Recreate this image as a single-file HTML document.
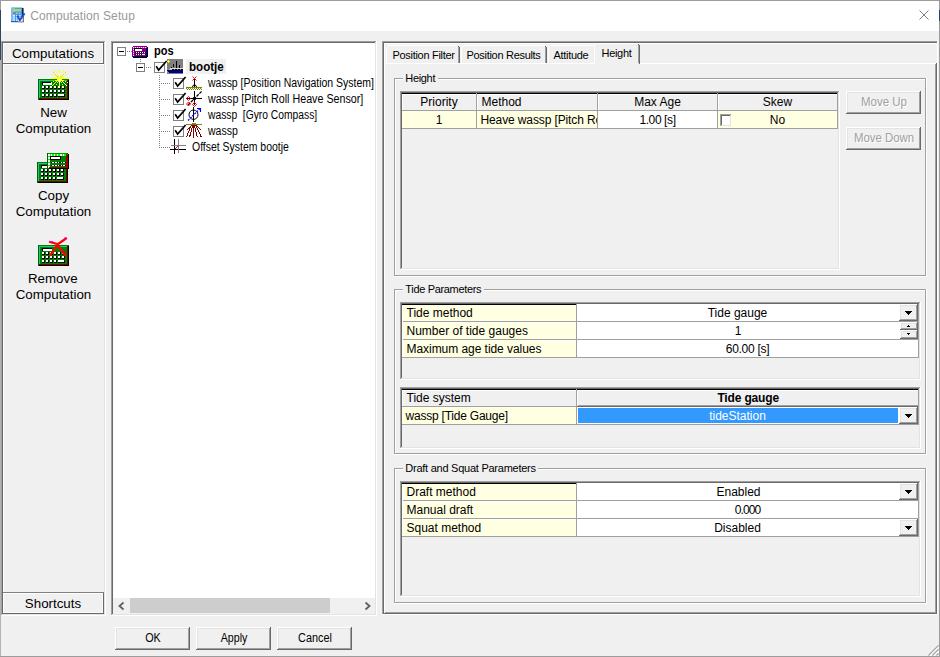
<!DOCTYPE html>
<html><head><meta charset="utf-8"><title>Computation Setup</title>
<style>
html,body{margin:0;padding:0;}
body{width:940px;height:657px;position:relative;overflow:hidden;background:#f0f0f0;font-family:"Liberation Sans",sans-serif;}
.a{position:absolute;}
.t{white-space:pre;font-family:"Liberation Sans",sans-serif;}
</style></head><body>
<div class="a" style="left:1px;top:1px;width:938px;height:30px;background:#ffffff;"></div>
<div class="a" style="left:0px;top:0px;width:940px;height:1px;background:#9c9c9c;"></div>
<div class="a" style="left:0px;top:0px;width:1px;height:10px;background:#9c9c9c;"></div>
<div class="a" style="left:0px;top:10px;width:1px;height:50px;background:#2a4763;"></div>
<div class="a" style="left:0px;top:60px;width:1px;height:597px;background:#b4b4b4;"></div>
<div class="a" style="left:939px;top:0px;width:1px;height:10px;background:#9c9c9c;"></div>
<div class="a" style="left:939px;top:10px;width:1px;height:11px;background:#25456a;"></div>
<div class="a" style="left:939px;top:21px;width:1px;height:636px;background:#9c9c9c;"></div>
<div class="a" style="left:0px;top:656px;width:940px;height:1px;background:#9c9c9c;"></div>
<svg class="a" style="left:11px;top:7px;shape-rendering:auto" width="14" height="16" viewBox="0 0 14 16" shape-rendering="crispEdges"><rect x="0" y="0.5" width="12" height="14.5" rx="1" fill="#4a98ec"/><rect x="0" y="0.5" width="4" height="14.5" fill="#8cc4f8" opacity=".75"/><rect x="11" y="1" width="1.6" height="7" fill="#10243c"/><rect x="2" y="2" width="8" height="2.4" fill="#9be15a"/><rect x="2.2" y="5.5" width="1.6" height="1.4" fill="#e03020"/><rect x="5" y="5.5" width="1.6" height="1.4" fill="#c0c8d0"/><rect x="7.8" y="5.5" width="1.6" height="1.4" fill="#c0c8d0"/><rect x="2.2" y="8" width="1.6" height="1.4" fill="#e8f2ff"/><rect x="5" y="8" width="1.6" height="1.4" fill="#e8f2ff"/><rect x="7.8" y="8" width="1.6" height="1.4" fill="#e8f2ff"/><rect x="2.2" y="10.2" width="1.6" height="1.4" fill="#e8f2ff"/><rect x="5" y="10.2" width="1.6" height="1.4" fill="#e8f2ff"/><rect x="7.8" y="10.2" width="1.6" height="1.4" fill="#e8f2ff"/><rect x="2.2" y="12.4" width="1.6" height="1.4" fill="#e8f2ff"/><rect x="5" y="12.4" width="1.6" height="1.4" fill="#e8f2ff"/><rect x="7.8" y="12.4" width="1.6" height="1.4" fill="#e8f2ff"/><rect x="0" y="14" width="7" height="1.2" fill="#1b5fb8"/><rect x="7" y="10" width="5.5" height="5" fill="#f4f6f8"/><rect x="6.8" y="14.3" width="6" height="1.2" fill="#8a9098"/><rect x="11.8" y="9" width="1" height="6" fill="#50565e"/><path d="M6.3 8.6 L8.8 13.2 L13.6 6.2" stroke="#1c50c8" stroke-width="2" fill="none" shape-rendering="auto"/></svg>
<div class="a t " style="top:9.84px;font-size:12px;line-height:12px;color:#999999;letter-spacing:0.12px;left:30.2px;">Computation Setup</div>
<svg class="a" style="left:918px;top:9px" width="12" height="12" viewBox="0 0 12 12"><path d="M1.5 1.5 L10.5 10.5 M10.5 1.5 L1.5 10.5" stroke="#808080" stroke-width="1" fill="none"/></svg>
<div class="a" style="left:1px;top:615px;width:105px;height:1px;background:#ffffff;"></div>
<div class="a" style="left:105px;top:41px;width:1px;height:575px;background:#ffffff;"></div>
<div class="a" style="left:2px;top:614px;width:103px;height:1px;background:#e3e3e3;"></div>
<div class="a" style="left:104px;top:42px;width:1px;height:573px;background:#e3e3e3;"></div>
<div class="a" style="left:1px;top:41px;width:104px;height:1px;background:#a0a0a0;"></div>
<div class="a" style="left:1px;top:41px;width:1px;height:574px;background:#a0a0a0;"></div>
<div class="a" style="left:2px;top:42px;width:102px;height:1px;background:#696969;"></div>
<div class="a" style="left:2px;top:42px;width:1px;height:572px;background:#696969;"></div>
<div class="a" style="left:3px;top:63px;width:101px;height:1px;background:#696969;"></div>
<div class="a" style="left:103px;top:43px;width:1px;height:21px;background:#696969;"></div>
<div class="a" style="left:4px;top:62px;width:99px;height:1px;background:#fafafa;"></div>
<div class="a" style="left:102px;top:44px;width:1px;height:19px;background:#fafafa;"></div>
<div class="a" style="left:3px;top:43px;width:100px;height:1px;background:#ffffff;"></div>
<div class="a" style="left:3px;top:43px;width:1px;height:20px;background:#ffffff;"></div>
<div class="a" style="left:3px;top:64px;width:101px;height:1px;background:#ffffff;"></div>
<div class="a" style="left:3px;top:64px;width:1px;height:528px;background:#ffffff;"></div>
<div class="a" style="left:3px;top:592px;width:101px;height:1px;background:#808080;"></div>
<div class="a" style="left:3px;top:613px;width:101px;height:1px;background:#696969;"></div>
<div class="a" style="left:103px;top:593px;width:1px;height:21px;background:#696969;"></div>
<div class="a" style="left:4px;top:612px;width:99px;height:1px;background:#fafafa;"></div>
<div class="a" style="left:102px;top:594px;width:1px;height:19px;background:#fafafa;"></div>
<div class="a" style="left:3px;top:593px;width:100px;height:1px;background:#ffffff;"></div>
<div class="a" style="left:3px;top:593px;width:1px;height:20px;background:#ffffff;"></div>
<div class="a t " style="top:46.72px;font-size:13.33px;line-height:13.33px;color:#000;left:-147px;width:400px;text-align:center;">Computations</div>
<div class="a t " style="top:596.72px;font-size:13.33px;line-height:13.33px;color:#000;left:-147px;width:400px;text-align:center;">Shortcuts</div>
<div class="a t " style="top:105.72px;font-size:13.33px;line-height:13.33px;color:#000;left:-146.5px;width:400px;text-align:center;">New</div>
<div class="a t " style="top:121.72px;font-size:13.33px;line-height:13.33px;color:#000;left:-146.5px;width:400px;text-align:center;">Computation</div>
<div class="a t " style="top:188.72px;font-size:13.33px;line-height:13.33px;color:#000;left:-146.5px;width:400px;text-align:center;">Copy</div>
<div class="a t " style="top:204.72px;font-size:13.33px;line-height:13.33px;color:#000;left:-146.5px;width:400px;text-align:center;">Computation</div>
<div class="a t " style="top:271.72px;font-size:13.33px;line-height:13.33px;color:#000;left:-147.2px;width:400px;text-align:center;">Remove</div>
<div class="a t " style="top:287.72px;font-size:13.33px;line-height:13.33px;color:#000;left:-146.5px;width:400px;text-align:center;">Computation</div>
<svg class="a" style="left:30px;top:70px;" width="40" height="32" viewBox="0 0 40 32" shape-rendering="crispEdges"><rect x="8" y="9" width="31" height="21" fill="#008000"/><rect x="8" y="9" width="1" height="20" fill="#006000"/><rect x="9" y="10" width="1" height="18" fill="#20c890"/><rect x="9" y="10" width="28" height="1" fill="#20c890"/><rect x="9" y="28" width="29" height="1" fill="#800000"/><rect x="37" y="10" width="1" height="19" fill="#800000"/><rect x="9" y="29" width="30" height="1" fill="#000000"/><rect x="38" y="10" width="1" height="20" fill="#000000"/><rect x="12" y="12" width="10" height="3" fill="#000000"/><rect x="13" y="13" width="9" height="2" fill="#ffffff"/><rect x="12" y="16" width="3" height="3" fill="#000000"/><rect x="12" y="16" width="2" height="2" fill="#ffffff"/><rect x="16" y="16" width="3" height="3" fill="#000000"/><rect x="16" y="16" width="2" height="2" fill="#ffffff"/><rect x="20" y="16" width="3" height="3" fill="#000000"/><rect x="20" y="16" width="2" height="2" fill="#ffffff"/><rect x="24" y="16" width="3" height="3" fill="#000000"/><rect x="24" y="16" width="2" height="2" fill="#ffffff"/><rect x="28" y="16" width="3" height="3" fill="#000000"/><rect x="28" y="16" width="2" height="2" fill="#ffffff"/><rect x="32" y="16" width="3" height="3" fill="#000000"/><rect x="32" y="16" width="2" height="2" fill="#ffffff"/><rect x="12" y="20" width="3" height="3" fill="#000000"/><rect x="12" y="20" width="2" height="2" fill="#ffffff"/><rect x="16" y="20" width="3" height="3" fill="#000000"/><rect x="16" y="20" width="2" height="2" fill="#ffffff"/><rect x="20" y="20" width="3" height="3" fill="#000000"/><rect x="20" y="20" width="2" height="2" fill="#ffffff"/><rect x="24" y="20" width="3" height="3" fill="#000000"/><rect x="24" y="20" width="2" height="2" fill="#ffffff"/><rect x="28" y="20" width="3" height="3" fill="#000000"/><rect x="28" y="20" width="2" height="2" fill="#ffffff"/><rect x="32" y="20" width="3" height="3" fill="#000000"/><rect x="32" y="20" width="2" height="2" fill="#ffffff"/><rect x="12" y="24" width="3" height="3" fill="#000000"/><rect x="12" y="24" width="2" height="2" fill="#ffffff"/><rect x="16" y="24" width="3" height="3" fill="#000000"/><rect x="16" y="24" width="2" height="2" fill="#ffffff"/><rect x="20" y="24" width="3" height="3" fill="#000000"/><rect x="20" y="24" width="2" height="2" fill="#ffffff"/><rect x="24" y="24" width="3" height="3" fill="#000000"/><rect x="24" y="24" width="2" height="2" fill="#ffffff"/><rect x="28" y="24" width="7" height="3" fill="#000000"/><rect x="28" y="24" width="6" height="2" fill="#ffffff"/><rect x="29" y="7" width="1" height="1" fill="#ffff00"/><rect x="29" y="9" width="1" height="1" fill="#ffff00"/><rect x="28" y="8" width="1" height="1" fill="#ffff00"/><rect x="30" y="8" width="1" height="1" fill="#ffff00"/><rect x="29" y="6" width="1" height="1" fill="#ffff00"/><rect x="29" y="10" width="1" height="1" fill="#ffff00"/><rect x="27" y="8" width="1" height="1" fill="#ffff00"/><rect x="31" y="8" width="1" height="1" fill="#ffff00"/><rect x="29" y="5" width="1" height="1" fill="#ffff00"/><rect x="29" y="11" width="1" height="1" fill="#ffff00"/><rect x="26" y="8" width="1" height="1" fill="#ffff00"/><rect x="32" y="8" width="1" height="1" fill="#ffff00"/><rect x="29" y="4" width="1" height="1" fill="#ffff00"/><rect x="29" y="12" width="1" height="1" fill="#ffff00"/><rect x="25" y="8" width="1" height="1" fill="#ffff00"/><rect x="33" y="8" width="1" height="1" fill="#ffff00"/><rect x="29" y="3" width="1" height="1" fill="#ffff00"/><rect x="29" y="13" width="1" height="1" fill="#ffff00"/><rect x="24" y="8" width="1" height="1" fill="#ffff00"/><rect x="34" y="8" width="1" height="1" fill="#ffff00"/><rect x="29" y="2" width="1" height="1" fill="#ffff00"/><rect x="29" y="14" width="1" height="1" fill="#ffff00"/><rect x="23" y="8" width="1" height="1" fill="#ffff00"/><rect x="35" y="8" width="1" height="1" fill="#ffff00"/><rect x="29" y="1" width="1" height="1" fill="#ffff00"/><rect x="29" y="15" width="1" height="1" fill="#ffff00"/><rect x="22" y="8" width="1" height="1" fill="#ffff00"/><rect x="36" y="8" width="1" height="1" fill="#ffff00"/><rect x="29" y="0" width="1" height="1" fill="#ffff00"/><rect x="29" y="16" width="1" height="1" fill="#ffff00"/><rect x="21" y="8" width="1" height="1" fill="#ffff00"/><rect x="37" y="8" width="1" height="1" fill="#ffff00"/><rect x="30" y="7" width="1" height="1" fill="#ffff00"/><rect x="28" y="9" width="1" height="1" fill="#ffff00"/><rect x="30" y="9" width="1" height="1" fill="#ffff00"/><rect x="28" y="7" width="1" height="1" fill="#ffff00"/><rect x="31" y="6" width="1" height="1" fill="#c8c8c8"/><rect x="27" y="10" width="1" height="1" fill="#ffff00"/><rect x="31" y="10" width="1" height="1" fill="#ffff00"/><rect x="27" y="6" width="1" height="1" fill="#c0c0c0"/><rect x="32" y="5" width="1" height="1" fill="#ffff00"/><rect x="26" y="11" width="1" height="1" fill="#ffff00"/><rect x="32" y="11" width="1" height="1" fill="#ffffff"/><rect x="26" y="5" width="1" height="1" fill="#ffff00"/><rect x="33" y="4" width="1" height="1" fill="#c8c8c8"/><rect x="25" y="12" width="1" height="1" fill="#ffff00"/><rect x="33" y="12" width="1" height="1" fill="#ffffff"/><rect x="25" y="4" width="1" height="1" fill="#c0c0c0"/><rect x="34" y="3" width="1" height="1" fill="#ffff00"/><rect x="24" y="13" width="1" height="1" fill="#ffff00"/><rect x="34" y="13" width="1" height="1" fill="#ffffff"/><rect x="24" y="3" width="1" height="1" fill="#ffff00"/><rect x="35" y="2" width="1" height="1" fill="#c8c8c8"/><rect x="23" y="14" width="1" height="1" fill="#ffff00"/><rect x="35" y="14" width="1" height="1" fill="#ffffff"/><rect x="23" y="2" width="1" height="1" fill="#c0c0c0"/><rect x="36" y="1" width="1" height="1" fill="#ffff00"/><rect x="22" y="15" width="1" height="1" fill="#ffff00"/><rect x="36" y="15" width="1" height="1" fill="#ffffff"/><rect x="22" y="1" width="1" height="1" fill="#ffff00"/><rect x="31" y="7" width="1" height="1" fill="#ffff00"/><rect x="27" y="9" width="1" height="1" fill="#ffff00"/><rect x="30" y="6" width="1" height="1" fill="#ffff00"/><rect x="28" y="10" width="1" height="1" fill="#ffff00"/><rect x="27" y="7" width="1" height="1" fill="#ffff00"/><rect x="31" y="9" width="1" height="1" fill="#ffff00"/><rect x="28" y="6" width="1" height="1" fill="#ffff00"/><rect x="30" y="10" width="1" height="1" fill="#ffff00"/><rect x="32" y="6" width="1" height="1" fill="#ffff00"/><rect x="26" y="10" width="1" height="1" fill="#ffff00"/><rect x="30" y="5" width="1" height="1" fill="#ffff00"/><rect x="28" y="11" width="1" height="1" fill="#ffff00"/><rect x="26" y="6" width="1" height="1" fill="#ffff00"/><rect x="32" y="10" width="1" height="1" fill="#ffff00"/><rect x="28" y="5" width="1" height="1" fill="#ffff00"/><rect x="30" y="11" width="1" height="1" fill="#ffff00"/><rect x="33" y="6" width="1" height="1" fill="#ffff00"/><rect x="25" y="10" width="1" height="1" fill="#ffff00"/><rect x="31" y="4" width="1" height="1" fill="#ffff00"/><rect x="27" y="12" width="1" height="1" fill="#ffff00"/><rect x="25" y="6" width="1" height="1" fill="#ffff00"/><rect x="33" y="10" width="1" height="1" fill="#ffff00"/><rect x="27" y="4" width="1" height="1" fill="#ffff00"/><rect x="31" y="12" width="1" height="1" fill="#ffff00"/><rect x="35" y="5" width="1" height="1" fill="#ffff00"/><rect x="23" y="11" width="1" height="1" fill="#ffff00"/><rect x="32" y="2" width="1" height="1" fill="#ffff00"/><rect x="26" y="14" width="1" height="1" fill="#ffff00"/><rect x="23" y="5" width="1" height="1" fill="#ffff00"/><rect x="35" y="11" width="1" height="1" fill="#ffff00"/><rect x="26" y="2" width="1" height="1" fill="#ffff00"/><rect x="32" y="14" width="1" height="1" fill="#ffff00"/><rect x="37" y="4" width="1" height="1" fill="#ffff00"/><rect x="21" y="12" width="1" height="1" fill="#ffff00"/><rect x="33" y="0" width="1" height="1" fill="#ffff00"/><rect x="25" y="16" width="1" height="1" fill="#ffff00"/><rect x="21" y="4" width="1" height="1" fill="#ffff00"/><rect x="37" y="12" width="1" height="1" fill="#ffff00"/><rect x="25" y="0" width="1" height="1" fill="#ffff00"/><rect x="33" y="16" width="1" height="1" fill="#ffff00"/><rect x="27" y="7" width="5" height="3" fill="#ffff00"/><rect x="28" y="6" width="3" height="5" fill="#ffff00"/><rect x="29" y="3" width="1" height="4" fill="#ffffff"/><rect x="29" y="9" width="1" height="6" fill="#ffffff"/><rect x="30" y="9" width="1" height="1" fill="#ffffff"/></svg>
<svg class="a" style="left:30px;top:148px;" width="40" height="36" viewBox="0 0 40 36" shape-rendering="crispEdges"><rect x="7" y="14" width="31" height="21" fill="#008000"/><rect x="7" y="14" width="1" height="20" fill="#006000"/><rect x="8" y="15" width="1" height="18" fill="#20c890"/><rect x="8" y="15" width="28" height="1" fill="#20c890"/><rect x="8" y="33" width="29" height="1" fill="#800000"/><rect x="36" y="15" width="1" height="19" fill="#800000"/><rect x="8" y="34" width="30" height="1" fill="#000000"/><rect x="37" y="15" width="1" height="20" fill="#000000"/><rect x="11" y="17" width="10" height="3" fill="#000000"/><rect x="12" y="18" width="9" height="2" fill="#ffffff"/><rect x="11" y="21" width="3" height="3" fill="#000000"/><rect x="11" y="21" width="2" height="2" fill="#ffffff"/><rect x="15" y="21" width="3" height="3" fill="#000000"/><rect x="15" y="21" width="2" height="2" fill="#ffffff"/><rect x="19" y="21" width="3" height="3" fill="#000000"/><rect x="19" y="21" width="2" height="2" fill="#ffffff"/><rect x="23" y="21" width="3" height="3" fill="#000000"/><rect x="23" y="21" width="2" height="2" fill="#ffffff"/><rect x="27" y="21" width="3" height="3" fill="#000000"/><rect x="27" y="21" width="2" height="2" fill="#ffffff"/><rect x="31" y="21" width="3" height="3" fill="#000000"/><rect x="31" y="21" width="2" height="2" fill="#ffffff"/><rect x="11" y="25" width="3" height="3" fill="#000000"/><rect x="11" y="25" width="2" height="2" fill="#ffffff"/><rect x="15" y="25" width="3" height="3" fill="#000000"/><rect x="15" y="25" width="2" height="2" fill="#ffffff"/><rect x="19" y="25" width="3" height="3" fill="#000000"/><rect x="19" y="25" width="2" height="2" fill="#ffffff"/><rect x="23" y="25" width="3" height="3" fill="#000000"/><rect x="23" y="25" width="2" height="2" fill="#ffffff"/><rect x="27" y="25" width="3" height="3" fill="#000000"/><rect x="27" y="25" width="2" height="2" fill="#ffffff"/><rect x="31" y="25" width="3" height="3" fill="#000000"/><rect x="31" y="25" width="2" height="2" fill="#ffffff"/><rect x="11" y="29" width="3" height="3" fill="#000000"/><rect x="11" y="29" width="2" height="2" fill="#ffffff"/><rect x="15" y="29" width="3" height="3" fill="#000000"/><rect x="15" y="29" width="2" height="2" fill="#ffffff"/><rect x="19" y="29" width="3" height="3" fill="#000000"/><rect x="19" y="29" width="2" height="2" fill="#ffffff"/><rect x="23" y="29" width="3" height="3" fill="#000000"/><rect x="23" y="29" width="2" height="2" fill="#ffffff"/><rect x="27" y="29" width="7" height="3" fill="#000000"/><rect x="27" y="29" width="6" height="2" fill="#ffffff"/><rect x="17" y="5" width="21" height="15" fill="#008000"/><rect x="18" y="5" width="19" height="1" fill="#009000"/><rect x="17" y="5" width="1" height="15" fill="#006000"/><rect x="18" y="6" width="18" height="2" fill="#00ff00"/><rect x="18" y="6" width="2" height="13" fill="#00ff00"/><rect x="18" y="6" width="2" height="2" fill="#ffffff"/><rect x="21" y="6" width="1" height="2" fill="#ffffff"/><rect x="24" y="6" width="1" height="2" fill="#ffffff"/><rect x="27" y="6" width="1" height="2" fill="#ffffff"/><rect x="30" y="6" width="2" height="2" fill="#ffffff"/><rect x="33" y="6" width="1" height="2" fill="#ffffff"/><rect x="18" y="6" width="2" height="2" fill="#ffffff"/><rect x="18" y="9" width="2" height="2" fill="#ffffff"/><rect x="18" y="12" width="2" height="2" fill="#ffffff"/><rect x="18" y="15" width="2" height="2" fill="#ffffff"/><rect x="18" y="18" width="2" height="2" fill="#ffffff"/><rect x="36" y="7" width="2" height="12" fill="#a00000"/><rect x="19" y="19" width="19" height="1" fill="#a00000"/><rect x="38" y="6" width="1" height="14" fill="#000000"/><rect x="19" y="20" width="20" height="1" fill="#000000"/><rect x="20" y="8" width="11" height="4" fill="#000000"/><rect x="21" y="9" width="9" height="2" fill="#ffffff"/><rect x="21" y="14" width="15" height="1" fill="#000000"/><rect x="22" y="14" width="2" height="1" fill="#ffffff"/><rect x="25" y="14" width="2" height="1" fill="#ffffff"/><rect x="28" y="14" width="1" height="1" fill="#ffffff"/><rect x="31" y="14" width="1" height="1" fill="#ffffff"/><rect x="33" y="14" width="2" height="1" fill="#ffffff"/><rect x="21" y="17" width="15" height="1" fill="#000000"/><rect x="22" y="17" width="2" height="1" fill="#ffffff"/><rect x="25" y="17" width="2" height="1" fill="#ffffff"/><rect x="28" y="17" width="1" height="1" fill="#ffffff"/><rect x="31" y="17" width="1" height="1" fill="#ffffff"/><rect x="33" y="17" width="2" height="1" fill="#ffffff"/></svg>
<svg class="a" style="left:30px;top:232px;" width="40" height="36" viewBox="0 0 40 36" shape-rendering="crispEdges"><rect x="8" y="13" width="31" height="21" fill="#008000"/><rect x="8" y="13" width="1" height="20" fill="#006000"/><rect x="9" y="14" width="1" height="18" fill="#20c890"/><rect x="9" y="14" width="28" height="1" fill="#20c890"/><rect x="9" y="32" width="29" height="1" fill="#800000"/><rect x="37" y="14" width="1" height="19" fill="#800000"/><rect x="9" y="33" width="30" height="1" fill="#000000"/><rect x="38" y="14" width="1" height="20" fill="#000000"/><rect x="12" y="16" width="10" height="3" fill="#000000"/><rect x="13" y="17" width="9" height="2" fill="#ffffff"/><rect x="12" y="20" width="3" height="3" fill="#000000"/><rect x="12" y="20" width="2" height="2" fill="#ffffff"/><rect x="16" y="20" width="3" height="3" fill="#000000"/><rect x="16" y="20" width="2" height="2" fill="#ffffff"/><rect x="20" y="20" width="3" height="3" fill="#000000"/><rect x="20" y="20" width="2" height="2" fill="#ffffff"/><rect x="24" y="20" width="3" height="3" fill="#000000"/><rect x="24" y="20" width="2" height="2" fill="#ffffff"/><rect x="28" y="20" width="3" height="3" fill="#000000"/><rect x="28" y="20" width="2" height="2" fill="#ffffff"/><rect x="32" y="20" width="3" height="3" fill="#000000"/><rect x="32" y="20" width="2" height="2" fill="#ffffff"/><rect x="12" y="24" width="3" height="3" fill="#000000"/><rect x="12" y="24" width="2" height="2" fill="#ffffff"/><rect x="16" y="24" width="3" height="3" fill="#000000"/><rect x="16" y="24" width="2" height="2" fill="#ffffff"/><rect x="20" y="24" width="3" height="3" fill="#000000"/><rect x="20" y="24" width="2" height="2" fill="#ffffff"/><rect x="24" y="24" width="3" height="3" fill="#000000"/><rect x="24" y="24" width="2" height="2" fill="#ffffff"/><rect x="28" y="24" width="3" height="3" fill="#000000"/><rect x="28" y="24" width="2" height="2" fill="#ffffff"/><rect x="32" y="24" width="3" height="3" fill="#000000"/><rect x="32" y="24" width="2" height="2" fill="#ffffff"/><rect x="12" y="28" width="3" height="3" fill="#000000"/><rect x="12" y="28" width="2" height="2" fill="#ffffff"/><rect x="16" y="28" width="3" height="3" fill="#000000"/><rect x="16" y="28" width="2" height="2" fill="#ffffff"/><rect x="20" y="28" width="3" height="3" fill="#000000"/><rect x="20" y="28" width="2" height="2" fill="#ffffff"/><rect x="24" y="28" width="3" height="3" fill="#000000"/><rect x="24" y="28" width="2" height="2" fill="#ffffff"/><rect x="28" y="28" width="7" height="3" fill="#000000"/><rect x="28" y="28" width="6" height="2" fill="#ffffff"/><g shape-rendering="auto"><path d="M20 10 L27 12 L35 23 M36 6.5 L28 12 L20.5 23" stroke="#ff0000" stroke-width="2.3" fill="none" stroke-linecap="round"/><path d="M20 9.5 L23 9.5 M34 6 L36.5 6" stroke="#ff00ff" stroke-width="1" /></g></svg>
<div class="a" style="left:111px;top:41px;width:266px;height:575px;background:#ffffff;"></div>
<div class="a" style="left:111px;top:615px;width:266px;height:1px;background:#ffffff;"></div>
<div class="a" style="left:376px;top:41px;width:1px;height:575px;background:#ffffff;"></div>
<div class="a" style="left:112px;top:614px;width:264px;height:1px;background:#e3e3e3;"></div>
<div class="a" style="left:375px;top:42px;width:1px;height:573px;background:#e3e3e3;"></div>
<div class="a" style="left:111px;top:41px;width:265px;height:1px;background:#a0a0a0;"></div>
<div class="a" style="left:111px;top:41px;width:1px;height:574px;background:#a0a0a0;"></div>
<div class="a" style="left:112px;top:42px;width:263px;height:1px;background:#696969;"></div>
<div class="a" style="left:112px;top:42px;width:1px;height:572px;background:#696969;"></div>
<div class="a" style="left:113px;top:598px;width:262px;height:16px;background:#f0f0f0;"></div>
<div class="a" style="left:130px;top:598px;width:200px;height:15px;background:#cdcdcd;"></div>
<svg class="a" style="left:116px;top:600px" width="12" height="12" viewBox="0 0 12 12"><path d="M7.5 2.5 L3.5 6 L7.5 9.5" stroke="#606060" stroke-width="1.8" fill="none"/></svg>
<svg class="a" style="left:361px;top:600px" width="12" height="12" viewBox="0 0 12 12"><path d="M4.5 2.5 L8.5 6 L4.5 9.5" stroke="#606060" stroke-width="1.8" fill="none"/></svg>
<div class="a" style="left:117px;top:47px;width:9px;height:9px;background:#808080;"></div>
<div class="a" style="left:118px;top:48px;width:7px;height:7px;background:#ffffff;"></div>
<div class="a" style="left:119px;top:51px;width:5px;height:1px;background:#000000;"></div>
<div class="a" style="left:127px;top:51px;width:5px;height:1px;background:transparent;background:repeating-linear-gradient(90deg,#808080 0 1px,transparent 1px 2px);"></div>
<div class="a" style="left:136px;top:63px;width:9px;height:9px;background:#808080;"></div>
<div class="a" style="left:137px;top:64px;width:7px;height:7px;background:#ffffff;"></div>
<div class="a" style="left:138px;top:67px;width:5px;height:1px;background:#000000;"></div>
<div class="a" style="left:146px;top:67px;width:6px;height:1px;background:transparent;background:repeating-linear-gradient(90deg,#808080 0 1px,transparent 1px 2px);"></div>
<div class="a" style="left:140px;top:59px;width:1px;height:4px;background:transparent;background:repeating-linear-gradient(180deg,#808080 0 1px,transparent 1px 2px);"></div>
<div class="a" style="left:154px;top:62px;width:11px;height:11px;background:#808080;"></div>
<div class="a" style="left:155px;top:63px;width:9px;height:9px;background:#ffffff;"></div>
<svg class="a" style="left:154px;top:60px" width="16" height="14" viewBox="0 0 16 14"><path d="M2.2 6.3 L4.6 10 L12.6 1" stroke="#000" stroke-width="1.7" fill="none" stroke-linejoin="miter"/></svg>
<div class="a" style="left:159px;top:75px;width:1px;height:73px;background:transparent;background:repeating-linear-gradient(180deg,#808080 0 1px,transparent 1px 2px);"></div>
<div class="a" style="left:161px;top:83px;width:10px;height:1px;background:transparent;background:repeating-linear-gradient(90deg,#808080 0 1px,transparent 1px 2px);"></div>
<div class="a" style="left:173px;top:78px;width:11px;height:11px;background:#808080;"></div>
<div class="a" style="left:174px;top:79px;width:9px;height:9px;background:#ffffff;"></div>
<svg class="a" style="left:173px;top:76px" width="16" height="14" viewBox="0 0 16 14"><path d="M2.2 6.3 L4.6 10 L12.6 1" stroke="#000" stroke-width="1.7" fill="none" stroke-linejoin="miter"/></svg>
<div class="a" style="left:161px;top:99px;width:10px;height:1px;background:transparent;background:repeating-linear-gradient(90deg,#808080 0 1px,transparent 1px 2px);"></div>
<div class="a" style="left:173px;top:94px;width:11px;height:11px;background:#808080;"></div>
<div class="a" style="left:174px;top:95px;width:9px;height:9px;background:#ffffff;"></div>
<svg class="a" style="left:173px;top:92px" width="16" height="14" viewBox="0 0 16 14"><path d="M2.2 6.3 L4.6 10 L12.6 1" stroke="#000" stroke-width="1.7" fill="none" stroke-linejoin="miter"/></svg>
<div class="a" style="left:161px;top:115px;width:10px;height:1px;background:transparent;background:repeating-linear-gradient(90deg,#808080 0 1px,transparent 1px 2px);"></div>
<div class="a" style="left:173px;top:110px;width:11px;height:11px;background:#808080;"></div>
<div class="a" style="left:174px;top:111px;width:9px;height:9px;background:#ffffff;"></div>
<svg class="a" style="left:173px;top:108px" width="16" height="14" viewBox="0 0 16 14"><path d="M2.2 6.3 L4.6 10 L12.6 1" stroke="#000" stroke-width="1.7" fill="none" stroke-linejoin="miter"/></svg>
<div class="a" style="left:161px;top:131px;width:10px;height:1px;background:transparent;background:repeating-linear-gradient(90deg,#808080 0 1px,transparent 1px 2px);"></div>
<div class="a" style="left:173px;top:126px;width:11px;height:11px;background:#808080;"></div>
<div class="a" style="left:174px;top:127px;width:9px;height:9px;background:#ffffff;"></div>
<svg class="a" style="left:173px;top:124px" width="16" height="14" viewBox="0 0 16 14"><path d="M2.2 6.3 L4.6 10 L12.6 1" stroke="#000" stroke-width="1.7" fill="none" stroke-linejoin="miter"/></svg>
<div class="a" style="left:159px;top:147px;width:11px;height:1px;background:transparent;background:repeating-linear-gradient(90deg,#808080 0 1px,transparent 1px 2px);"></div>
<svg class="a" style="left:132px;top:46px;" width="16" height="12" viewBox="0 0 16 12" shape-rendering="crispEdges"><rect x="1" y="0" width="14" height="1" fill="#800080"/><rect x="0" y="1" width="1" height="10" fill="#800080"/><rect x="1" y="1" width="14" height="1" fill="#ff00ff"/><rect x="1" y="1" width="1" height="10" fill="#ff00ff"/><rect x="1" y="1" width="1" height="1" fill="#ffffff"/><rect x="3" y="1" width="1" height="1" fill="#ffffff"/><rect x="5" y="1" width="1" height="1" fill="#ffffff"/><rect x="7" y="1" width="1" height="1" fill="#ffffff"/><rect x="9" y="1" width="1" height="1" fill="#ffffff"/><rect x="11" y="1" width="1" height="1" fill="#ffffff"/><rect x="13" y="1" width="1" height="1" fill="#ffffff"/><rect x="1" y="1" width="1" height="1" fill="#ffffff"/><rect x="1" y="3" width="1" height="1" fill="#ffffff"/><rect x="1" y="5" width="1" height="1" fill="#ffffff"/><rect x="1" y="7" width="1" height="1" fill="#ffffff"/><rect x="1" y="9" width="1" height="1" fill="#ffffff"/><rect x="2" y="2" width="12" height="8" fill="#800080"/><rect x="2" y="2" width="8" height="1" fill="#000000"/><rect x="2" y="2" width="1" height="3" fill="#000000"/><rect x="3" y="3" width="7" height="2" fill="#ffffff"/><rect x="3" y="6" width="11" height="1" fill="#000000"/><rect x="3" y="8" width="11" height="1" fill="#000000"/><rect x="4" y="6" width="1" height="1" fill="#ffffff"/><rect x="6" y="6" width="1" height="1" fill="#ffffff"/><rect x="8" y="6" width="1" height="1" fill="#ffffff"/><rect x="10" y="6" width="1" height="1" fill="#ffffff"/><rect x="12" y="6" width="1" height="1" fill="#ffffff"/><rect x="4" y="8" width="1" height="1" fill="#ffffff"/><rect x="6" y="8" width="1" height="1" fill="#ffffff"/><rect x="8" y="8" width="1" height="1" fill="#ffffff"/><rect x="10" y="8" width="3" height="1" fill="#ffffff"/><rect x="14" y="2" width="1" height="9" fill="#000080"/><rect x="15" y="1" width="1" height="10" fill="#000000"/><rect x="1" y="10" width="14" height="1" fill="#000080"/><rect x="1" y="11" width="14" height="1" fill="#000000"/></svg>
<div class="a t " style="top:45.040000000000006px;font-size:12px;line-height:12px;color:#000;font-weight:bold;transform:scaleX(0.92);transform-origin:0 0;left:154px;">pos</div>
<svg class="a" style="left:167px;top:59px;" width="16" height="15" viewBox="0 0 16 15" shape-rendering="crispEdges"><rect x="0" y="0" width="16" height="15" fill="#808080"/><rect x="6" y="5" width="1" height="3" fill="#000000"/><rect x="9" y="2" width="1" height="7" fill="#000000"/><rect x="12" y="6" width="1" height="3" fill="#000000"/><rect x="4" y="8" width="1" height="1" fill="#000000"/><rect x="3" y="9" width="13" height="1" fill="#e0e0e0"/><rect x="2" y="10" width="3" height="1" fill="#c0c0c0"/><rect x="5" y="10" width="2" height="1" fill="#000000"/><rect x="8" y="10" width="2" height="1" fill="#000000"/><rect x="11" y="10" width="2" height="1" fill="#000000"/><rect x="14" y="10" width="2" height="1" fill="#000000"/><rect x="0" y="11" width="16" height="3" fill="#000080"/><rect x="0" y="13" width="1" height="1" fill="#808080"/><rect x="0" y="12" width="1" height="1" fill="#808080"/><rect x="1" y="13" width="1" height="1" fill="#808080"/><rect x="2" y="12" width="1" height="1" fill="#000000"/><rect x="4" y="12" width="1" height="1" fill="#000000"/><rect x="1" y="1" width="1" height="3" fill="#ffff00"/><rect x="0" y="2" width="3" height="1" fill="#ffff00"/></svg>
<div class="a" style="left:186px;top:59px;width:40px;height:15px;background:#f0f0f0;"></div>
<div class="a t " style="top:61.040000000000006px;font-size:12px;line-height:12px;color:#000;font-weight:bold;transform:scaleX(0.965);transform-origin:0 0;left:189px;">bootje</div>
<svg class="a" style="left:186px;top:76px;" width="16" height="14" viewBox="0 0 16 14" shape-rendering="crispEdges"><rect x="8" y="3" width="1" height="8" fill="#000000"/><g shape-rendering="auto"><path d="M6.5 0.5 L10.5 4.5 M10.5 0.5 L6.5 4.5" stroke="#ff0000" stroke-width="1" fill="none"/><path d="M6.5 11 A2 2 0 0 1 10.5 11" stroke="#000" stroke-width="1" fill="none"/></g><rect x="0" y="11" width="16" height="2" fill="#808000"/><rect x="1" y="12" width="1" height="1" fill="#ffffff"/><rect x="3" y="12" width="1" height="1" fill="#ffffff"/><rect x="5" y="12" width="1" height="1" fill="#ffffff"/><rect x="7" y="12" width="1" height="1" fill="#ffffff"/><rect x="9" y="12" width="1" height="1" fill="#ffffff"/><rect x="11" y="12" width="1" height="1" fill="#ffffff"/><rect x="13" y="12" width="1" height="1" fill="#ffffff"/><rect x="15" y="12" width="1" height="1" fill="#ffffff"/><rect x="1" y="13" width="1" height="1" fill="#808000"/><rect x="3" y="13" width="1" height="1" fill="#808000"/><rect x="5" y="13" width="1" height="1" fill="#808000"/><rect x="7" y="13" width="1" height="1" fill="#808000"/><rect x="9" y="13" width="1" height="1" fill="#808000"/><rect x="11" y="13" width="1" height="1" fill="#808000"/><rect x="13" y="13" width="1" height="1" fill="#808000"/><rect x="15" y="13" width="1" height="1" fill="#808000"/></svg>
<svg class="a" style="left:186px;top:91px;" width="16" height="16" viewBox="0 0 16 16" shape-rendering="crispEdges"><rect x="8" y="0" width="1" height="14" fill="#000000"/><rect x="0" y="7" width="16" height="1" fill="#000000"/><g shape-rendering="auto"><path d="M15.5 0.5 L1.5 14.5" stroke="#000" stroke-width="1.3" stroke-dasharray="3 1" fill="none"/><circle cx="8.5" cy="7.5" r="1.8" fill="#000"/><path d="M0.5 7.5 L2.5 5.5 L4.5 7.5 L2.5 9.5 Z" stroke="#ff0000" stroke-width="1" fill="none"/><path d="M0.5 13 L2.5 11 L4.5 13 L2.5 15 Z" stroke="#ff0000" stroke-width="1" fill="none"/><path d="M6.5 13.5 L8.5 11.5 L10.5 13.5 L8.5 15.5 Z" stroke="#ff0000" stroke-width="1" fill="none"/></g></svg>
<svg class="a" style="left:186px;top:106px;" width="16" height="16" viewBox="0 0 16 16" shape-rendering="crispEdges"><g shape-rendering="auto"><ellipse cx="7.5" cy="8.7" rx="4.5" ry="4.7" stroke="#000" stroke-width="1" fill="none"/><path d="M7.5 1 L7.5 16" stroke="#000" stroke-width="1"/><path d="M2 14.5 L14 2.5" stroke="#0000ff" stroke-width="1.3" stroke-dasharray="2 1" fill="none"/><path d="M11 2.5 L14.5 2.5 L14.5 6" stroke="#0000ff" stroke-width="1.1" fill="none"/></g></svg>
<svg class="a" style="left:186px;top:123px;" width="16" height="16" viewBox="0 0 16 16" shape-rendering="crispEdges"><rect x="0" y="1" width="16" height="1" fill="#808000"/><rect x="6" y="0" width="4" height="1" fill="#808000"/><rect x="5" y="2" width="6" height="1" fill="#800000"/><g shape-rendering="crispEdges" stroke="#800000" stroke-width="1" fill="none"><path d="M4.5 3.5 L0.5 7.5"/><path d="M5 3 L0.5 14"/><path d="M6.5 3 L3.5 14.5"/><path d="M7.5 3 L7.5 14.5"/><path d="M8.5 3 L11.5 14.5"/><path d="M10 3 L15.5 14.5"/><path d="M11.5 3.5 L15.5 7.5"/></g></svg>
<svg class="a" style="left:170px;top:139px;" width="16" height="16" viewBox="0 0 16 16" shape-rendering="crispEdges"><rect x="4" y="0" width="1" height="15" fill="#000000"/><rect x="0" y="10" width="16" height="1" fill="#000000"/><rect x="8" y="0" width="1" height="14" fill="#808080"/><rect x="1" y="6" width="15" height="1" fill="#808080"/><rect x="5" y="9" width="1" height="1" fill="#ff0000"/><rect x="6" y="8" width="1" height="1" fill="#ff0000"/><rect x="7" y="7" width="1" height="1" fill="#ff0000"/></svg>
<div class="a t " style="top:77.04px;font-size:12px;line-height:12px;color:#000;transform:scaleX(0.873);transform-origin:0 0;left:208px;">wassp [Position Navigation System]</div>
<div class="a t " style="top:93.04px;font-size:12px;line-height:12px;color:#000;transform:scaleX(0.892);transform-origin:0 0;left:208px;">wassp [Pitch Roll Heave Sensor]</div>
<div class="a t " style="top:109.04px;font-size:12px;line-height:12px;color:#000;transform:scaleX(0.857);transform-origin:0 0;left:208px;">wassp&nbsp; [Gyro Compass]</div>
<div class="a t " style="top:125.03999999999999px;font-size:12px;line-height:12px;color:#000;transform:scaleX(0.875);transform-origin:0 0;left:208px;">wassp</div>
<div class="a t " style="top:141.04px;font-size:12px;line-height:12px;color:#000;transform:scaleX(0.871);transform-origin:0 0;left:192px;">Offset System bootje</div>
<div class="a" style="left:115px;top:649px;width:75px;height:1px;background:#696969;"></div>
<div class="a" style="left:189px;top:627px;width:1px;height:23px;background:#696969;"></div>
<div class="a" style="left:116px;top:648px;width:73px;height:1px;background:#a0a0a0;"></div>
<div class="a" style="left:188px;top:628px;width:1px;height:21px;background:#a0a0a0;"></div>
<div class="a" style="left:115px;top:627px;width:74px;height:1px;background:#ffffff;"></div>
<div class="a" style="left:115px;top:627px;width:1px;height:22px;background:#ffffff;"></div>
<div class="a" style="left:116px;top:628px;width:72px;height:1px;background:#e3e3e3;"></div>
<div class="a" style="left:116px;top:628px;width:1px;height:20px;background:#e3e3e3;"></div>
<div class="a t " style="top:632.34px;font-size:12px;line-height:12px;color:#000;transform:scaleX(0.9);transform-origin:50% 0;left:-47.5px;width:400px;text-align:center;">OK</div>
<div class="a" style="left:196px;top:649px;width:75px;height:1px;background:#696969;"></div>
<div class="a" style="left:270px;top:627px;width:1px;height:23px;background:#696969;"></div>
<div class="a" style="left:197px;top:648px;width:73px;height:1px;background:#a0a0a0;"></div>
<div class="a" style="left:269px;top:628px;width:1px;height:21px;background:#a0a0a0;"></div>
<div class="a" style="left:196px;top:627px;width:74px;height:1px;background:#ffffff;"></div>
<div class="a" style="left:196px;top:627px;width:1px;height:22px;background:#ffffff;"></div>
<div class="a" style="left:197px;top:628px;width:72px;height:1px;background:#e3e3e3;"></div>
<div class="a" style="left:197px;top:628px;width:1px;height:20px;background:#e3e3e3;"></div>
<div class="a t " style="top:632.34px;font-size:12px;line-height:12px;color:#000;transform:scaleX(0.89);transform-origin:50% 0;left:33.5px;width:400px;text-align:center;">Apply</div>
<div class="a" style="left:277px;top:649px;width:75px;height:1px;background:#696969;"></div>
<div class="a" style="left:351px;top:627px;width:1px;height:23px;background:#696969;"></div>
<div class="a" style="left:278px;top:648px;width:73px;height:1px;background:#a0a0a0;"></div>
<div class="a" style="left:350px;top:628px;width:1px;height:21px;background:#a0a0a0;"></div>
<div class="a" style="left:277px;top:627px;width:74px;height:1px;background:#ffffff;"></div>
<div class="a" style="left:277px;top:627px;width:1px;height:22px;background:#ffffff;"></div>
<div class="a" style="left:278px;top:628px;width:72px;height:1px;background:#e3e3e3;"></div>
<div class="a" style="left:278px;top:628px;width:1px;height:20px;background:#e3e3e3;"></div>
<div class="a t " style="top:632.34px;font-size:12px;line-height:12px;color:#000;transform:scaleX(0.905);transform-origin:50% 0;left:114.5px;width:400px;text-align:center;">Cancel</div>
<div class="a" style="left:382px;top:41px;width:556px;height:1px;background:#a0a0a0;"></div>
<div class="a" style="left:382px;top:41px;width:1px;height:574px;background:#a0a0a0;"></div>
<div class="a" style="left:383px;top:42px;width:554px;height:1px;background:#696969;"></div>
<div class="a" style="left:383px;top:42px;width:1px;height:572px;background:#696969;"></div>
<div class="a" style="left:382px;top:614px;width:556px;height:1px;background:#ffffff;"></div>
<div class="a" style="left:937px;top:41px;width:1px;height:574px;background:#ffffff;"></div>
<div class="a" style="left:384px;top:43px;width:1px;height:571px;background:#ffffff;"></div>
<div class="a" style="left:384px;top:63px;width:552px;height:1px;background:#ffffff;"></div>
<div class="a" style="left:384px;top:613px;width:553px;height:1px;background:#696969;"></div>
<div class="a" style="left:936px;top:63px;width:1px;height:551px;background:#696969;"></div>
<div class="a" style="left:385px;top:612px;width:551px;height:1px;background:#a0a0a0;"></div>
<div class="a" style="left:935px;top:64px;width:1px;height:549px;background:#a0a0a0;"></div>
<div class="a" style="left:384px;top:43px;width:553px;height:1px;background:#ffffff;"></div>
<div class="a" style="left:388px;top:45px;width:70px;height:1px;background:#ffffff;"></div>
<div class="a" style="left:386px;top:47px;width:1px;height:16px;background:#ffffff;"></div>
<div class="a" style="left:387px;top:46px;width:1px;height:1px;background:#ffffff;"></div>
<div class="a" style="left:459px;top:47px;width:1px;height:16px;background:#696969;"></div>
<div class="a" style="left:458px;top:47px;width:1px;height:16px;background:#a0a0a0;"></div>
<div class="a" style="left:458px;top:46px;width:1px;height:1px;background:#696969;"></div>
<div class="a t " style="top:49.69px;font-size:11px;line-height:11px;color:#000;letter-spacing:-0.3px;left:392.5px;">Position Filter</div>
<div class="a" style="left:463px;top:45px;width:82px;height:1px;background:#ffffff;"></div>
<div class="a" style="left:461px;top:47px;width:1px;height:16px;background:#ffffff;"></div>
<div class="a" style="left:462px;top:46px;width:1px;height:1px;background:#ffffff;"></div>
<div class="a" style="left:546px;top:47px;width:1px;height:16px;background:#696969;"></div>
<div class="a" style="left:545px;top:47px;width:1px;height:16px;background:#a0a0a0;"></div>
<div class="a" style="left:545px;top:46px;width:1px;height:1px;background:#696969;"></div>
<div class="a t " style="top:49.69px;font-size:11px;line-height:11px;color:#000;letter-spacing:-0.3px;left:466.5px;">Position Results</div>
<div class="a" style="left:550px;top:45px;width:49px;height:1px;background:#ffffff;"></div>
<div class="a" style="left:548px;top:47px;width:1px;height:16px;background:#ffffff;"></div>
<div class="a" style="left:549px;top:46px;width:1px;height:1px;background:#ffffff;"></div>
<div class="a" style="left:600px;top:47px;width:1px;height:16px;background:#696969;"></div>
<div class="a" style="left:599px;top:47px;width:1px;height:16px;background:#a0a0a0;"></div>
<div class="a" style="left:599px;top:46px;width:1px;height:1px;background:#696969;"></div>
<div class="a t " style="top:49.69px;font-size:11px;line-height:11px;color:#000;letter-spacing:-0.3px;left:553.5px;">Attitude</div>
<div class="a" style="left:594px;top:44px;width:46px;height:20px;background:#f0f0f0;"></div>
<div class="a" style="left:596px;top:43px;width:42px;height:1px;background:#ffffff;"></div>
<div class="a" style="left:594px;top:45px;width:1px;height:19px;background:#ffffff;"></div>
<div class="a" style="left:595px;top:44px;width:1px;height:1px;background:#ffffff;"></div>
<div class="a" style="left:639px;top:45px;width:1px;height:19px;background:#696969;"></div>
<div class="a" style="left:638px;top:45px;width:1px;height:18px;background:#a0a0a0;"></div>
<div class="a" style="left:638px;top:44px;width:1px;height:1px;background:#696969;"></div>
<div class="a t " style="top:47.69px;font-size:11px;line-height:11px;color:#000;letter-spacing:-0.3px;left:601.5px;">Height</div>
<div class="a" style="left:394px;top:78px;width:532px;height:1px;background:#a0a0a0;"></div>
<div class="a" style="left:395px;top:79px;width:530px;height:1px;background:#ffffff;"></div>
<div class="a" style="left:394px;top:78px;width:1px;height:198px;background:#a0a0a0;"></div>
<div class="a" style="left:395px;top:79px;width:1px;height:196px;background:#ffffff;"></div>
<div class="a" style="left:394px;top:275px;width:532px;height:1px;background:#a0a0a0;"></div>
<div class="a" style="left:394px;top:276px;width:533px;height:1px;background:#ffffff;"></div>
<div class="a" style="left:925px;top:78px;width:1px;height:198px;background:#a0a0a0;"></div>
<div class="a" style="left:926px;top:78px;width:1px;height:199px;background:#ffffff;"></div>
<div class="a" style="left:403px;top:78px;width:35px;height:2px;background:#f0f0f0;"></div>
<div class="a t " style="top:73.19px;font-size:11px;line-height:11px;color:#000;letter-spacing:-0.33px;left:405.3px;">Height</div>
<div class="a" style="left:394px;top:289px;width:532px;height:1px;background:#a0a0a0;"></div>
<div class="a" style="left:395px;top:290px;width:530px;height:1px;background:#ffffff;"></div>
<div class="a" style="left:394px;top:289px;width:1px;height:165px;background:#a0a0a0;"></div>
<div class="a" style="left:395px;top:290px;width:1px;height:163px;background:#ffffff;"></div>
<div class="a" style="left:394px;top:453px;width:532px;height:1px;background:#a0a0a0;"></div>
<div class="a" style="left:394px;top:454px;width:533px;height:1px;background:#ffffff;"></div>
<div class="a" style="left:925px;top:289px;width:1px;height:165px;background:#a0a0a0;"></div>
<div class="a" style="left:926px;top:289px;width:1px;height:166px;background:#ffffff;"></div>
<div class="a" style="left:403px;top:289px;width:81px;height:2px;background:#f0f0f0;"></div>
<div class="a t " style="top:284.19px;font-size:11px;line-height:11px;color:#000;letter-spacing:-0.33px;left:405.3px;">Tide Parameters</div>
<div class="a" style="left:394px;top:468px;width:532px;height:1px;background:#a0a0a0;"></div>
<div class="a" style="left:395px;top:469px;width:530px;height:1px;background:#ffffff;"></div>
<div class="a" style="left:394px;top:468px;width:1px;height:135px;background:#a0a0a0;"></div>
<div class="a" style="left:395px;top:469px;width:1px;height:133px;background:#ffffff;"></div>
<div class="a" style="left:394px;top:602px;width:532px;height:1px;background:#a0a0a0;"></div>
<div class="a" style="left:394px;top:603px;width:533px;height:1px;background:#ffffff;"></div>
<div class="a" style="left:925px;top:468px;width:1px;height:135px;background:#a0a0a0;"></div>
<div class="a" style="left:926px;top:468px;width:1px;height:136px;background:#ffffff;"></div>
<div class="a" style="left:403px;top:468px;width:135px;height:2px;background:#f0f0f0;"></div>
<div class="a t " style="top:463.19px;font-size:11px;line-height:11px;color:#000;letter-spacing:-0.25px;left:405.3px;">Draft and Squat Parameters</div>
<div class="a" style="left:400px;top:269px;width:440px;height:1px;background:#ffffff;"></div>
<div class="a" style="left:839px;top:91px;width:1px;height:179px;background:#ffffff;"></div>
<div class="a" style="left:401px;top:268px;width:438px;height:1px;background:#e3e3e3;"></div>
<div class="a" style="left:838px;top:92px;width:1px;height:177px;background:#e3e3e3;"></div>
<div class="a" style="left:400px;top:91px;width:439px;height:1px;background:#a0a0a0;"></div>
<div class="a" style="left:400px;top:91px;width:1px;height:178px;background:#a0a0a0;"></div>
<div class="a" style="left:401px;top:92px;width:437px;height:1px;background:#696969;"></div>
<div class="a" style="left:401px;top:92px;width:1px;height:176px;background:#696969;"></div>
<div class="a" style="left:402px;top:93px;width:74px;height:1px;background:#000000;"></div>
<div class="a" style="left:402px;top:94px;width:74px;height:1px;background:#ffffff;"></div>
<div class="a" style="left:402px;top:94px;width:1px;height:16px;background:#ffffff;"></div>
<div class="a" style="left:402px;top:110px;width:74px;height:1px;background:#a0a0a0;"></div>
<div class="a" style="left:476px;top:93px;width:1px;height:18px;background:#a0a0a0;"></div>
<div class="a t " style="top:95.84px;font-size:12px;line-height:12px;color:#000;left:239.0px;width:400px;text-align:center;">Priority</div>
<div class="a" style="left:477px;top:93px;width:120px;height:1px;background:#000000;"></div>
<div class="a" style="left:477px;top:94px;width:120px;height:1px;background:#ffffff;"></div>
<div class="a" style="left:477px;top:94px;width:1px;height:16px;background:#ffffff;"></div>
<div class="a" style="left:477px;top:110px;width:120px;height:1px;background:#a0a0a0;"></div>
<div class="a" style="left:597px;top:93px;width:1px;height:18px;background:#a0a0a0;"></div>
<div class="a t " style="top:95.84px;font-size:12px;line-height:12px;color:#000;left:481.5px;">Method</div>
<div class="a" style="left:598px;top:93px;width:119px;height:1px;background:#000000;"></div>
<div class="a" style="left:598px;top:94px;width:119px;height:1px;background:#ffffff;"></div>
<div class="a" style="left:598px;top:94px;width:1px;height:16px;background:#ffffff;"></div>
<div class="a" style="left:598px;top:110px;width:119px;height:1px;background:#a0a0a0;"></div>
<div class="a" style="left:717px;top:93px;width:1px;height:18px;background:#a0a0a0;"></div>
<div class="a t " style="top:95.84px;font-size:12px;line-height:12px;color:#000;left:457.5px;width:400px;text-align:center;">Max Age</div>
<div class="a" style="left:718px;top:93px;width:119px;height:1px;background:#000000;"></div>
<div class="a" style="left:718px;top:94px;width:119px;height:1px;background:#ffffff;"></div>
<div class="a" style="left:718px;top:94px;width:1px;height:16px;background:#ffffff;"></div>
<div class="a" style="left:718px;top:110px;width:119px;height:1px;background:#a0a0a0;"></div>
<div class="a" style="left:837px;top:93px;width:1px;height:18px;background:#a0a0a0;"></div>
<div class="a t " style="top:95.84px;font-size:12px;line-height:12px;color:#000;left:577.5px;width:400px;text-align:center;">Skew</div>
<div class="a" style="left:402px;top:111px;width:74px;height:17px;background:#ffffe1;"></div>
<div class="a" style="left:402px;top:128px;width:74px;height:1px;background:#a0a0a0;"></div>
<div class="a" style="left:476px;top:111px;width:1px;height:18px;background:#a0a0a0;"></div>
<div class="a t " style="top:113.84px;font-size:12px;line-height:12px;color:#000;left:239.0px;width:400px;text-align:center;">1</div>
<div class="a" style="left:477px;top:111px;width:120px;height:17px;background:#ffffe1;"></div>
<div class="a" style="left:477px;top:128px;width:120px;height:1px;background:#a0a0a0;"></div>
<div class="a" style="left:597px;top:111px;width:1px;height:18px;background:#a0a0a0;"></div>
<div class="a t" style="left:477px;top:111px;width:120px;height:17px;overflow:hidden;"><div class="a t" style="left:3.5px;top:2.84px;font-size:12px;line-height:12px;letter-spacing:-0.12px;">Heave wassp [Pitch Roll</div></div>
<div class="a" style="left:598px;top:111px;width:119px;height:17px;background:#ffffff;"></div>
<div class="a" style="left:598px;top:128px;width:119px;height:1px;background:#a0a0a0;"></div>
<div class="a" style="left:717px;top:111px;width:1px;height:18px;background:#a0a0a0;"></div>
<div class="a t " style="top:113.84px;font-size:12px;line-height:12px;color:#000;letter-spacing:-0.4px;left:457.5px;width:400px;text-align:center;">1.00 [s]</div>
<div class="a" style="left:718px;top:111px;width:119px;height:17px;background:#ffffe1;"></div>
<div class="a" style="left:718px;top:128px;width:119px;height:1px;background:#a0a0a0;"></div>
<div class="a" style="left:837px;top:111px;width:1px;height:18px;background:#a0a0a0;"></div>
<div class="a t " style="top:113.84px;font-size:12px;line-height:12px;color:#000;left:577.5px;width:400px;text-align:center;">No</div>
<div class="a" style="left:720px;top:114px;width:11px;height:12px;background:#ffffff;"></div>
<div class="a" style="left:720px;top:114px;width:11px;height:1px;background:#a0a0a0;"></div>
<div class="a" style="left:720px;top:114px;width:1px;height:12px;background:#a0a0a0;"></div>
<div class="a" style="left:721px;top:115px;width:9px;height:1px;background:#696969;"></div>
<div class="a" style="left:721px;top:115px;width:1px;height:10px;background:#696969;"></div>
<div class="a" style="left:721px;top:125px;width:10px;height:1px;background:#e3e3e3;"></div>
<div class="a" style="left:730px;top:115px;width:1px;height:11px;background:#e3e3e3;"></div>
<div class="a" style="left:846px;top:113px;width:75px;height:1px;background:#696969;"></div>
<div class="a" style="left:920px;top:91px;width:1px;height:23px;background:#696969;"></div>
<div class="a" style="left:847px;top:112px;width:73px;height:1px;background:#a0a0a0;"></div>
<div class="a" style="left:919px;top:92px;width:1px;height:21px;background:#a0a0a0;"></div>
<div class="a" style="left:846px;top:91px;width:74px;height:1px;background:#ffffff;"></div>
<div class="a" style="left:846px;top:91px;width:1px;height:22px;background:#ffffff;"></div>
<div class="a" style="left:847px;top:92px;width:72px;height:1px;background:#e3e3e3;"></div>
<div class="a" style="left:847px;top:92px;width:1px;height:20px;background:#e3e3e3;"></div>
<div class="a" style="left:846px;top:149px;width:75px;height:1px;background:#696969;"></div>
<div class="a" style="left:920px;top:127px;width:1px;height:23px;background:#696969;"></div>
<div class="a" style="left:847px;top:148px;width:73px;height:1px;background:#a0a0a0;"></div>
<div class="a" style="left:919px;top:128px;width:1px;height:21px;background:#a0a0a0;"></div>
<div class="a" style="left:846px;top:127px;width:74px;height:1px;background:#ffffff;"></div>
<div class="a" style="left:846px;top:127px;width:1px;height:22px;background:#ffffff;"></div>
<div class="a" style="left:847px;top:128px;width:72px;height:1px;background:#e3e3e3;"></div>
<div class="a" style="left:847px;top:128px;width:1px;height:20px;background:#e3e3e3;"></div>
<div class="a t " style="top:97.34px;font-size:12px;line-height:12px;color:#ffffff;transform:scaleX(0.955);transform-origin:50% 0;left:684.5px;width:400px;text-align:center;">Move Up</div>
<div class="a t " style="top:96.34px;font-size:12px;line-height:12px;color:#a0a0a0;transform:scaleX(0.955);transform-origin:50% 0;left:683.5px;width:400px;text-align:center;">Move Up</div>
<div class="a t " style="top:133.34px;font-size:12px;line-height:12px;color:#ffffff;transform:scaleX(0.95);transform-origin:50% 0;left:684.5px;width:400px;text-align:center;">Move Down</div>
<div class="a t " style="top:132.34px;font-size:12px;line-height:12px;color:#a0a0a0;transform:scaleX(0.95);transform-origin:50% 0;left:683.5px;width:400px;text-align:center;">Move Down</div>
<div class="a" style="left:400px;top:379px;width:521px;height:1px;background:#ffffff;"></div>
<div class="a" style="left:920px;top:302px;width:1px;height:78px;background:#ffffff;"></div>
<div class="a" style="left:401px;top:378px;width:519px;height:1px;background:#e3e3e3;"></div>
<div class="a" style="left:919px;top:303px;width:1px;height:76px;background:#e3e3e3;"></div>
<div class="a" style="left:400px;top:302px;width:520px;height:1px;background:#a0a0a0;"></div>
<div class="a" style="left:400px;top:302px;width:1px;height:77px;background:#a0a0a0;"></div>
<div class="a" style="left:401px;top:303px;width:518px;height:1px;background:#696969;"></div>
<div class="a" style="left:401px;top:303px;width:1px;height:75px;background:#696969;"></div>
<div class="a" style="left:402px;top:305px;width:174px;height:16px;background:#ffffe1;"></div>
<div class="a" style="left:402px;top:304px;width:174px;height:1px;background:#000000;"></div>
<div class="a" style="left:402px;top:321px;width:174px;height:1px;background:#a0a0a0;"></div>
<div class="a" style="left:576px;top:304px;width:1px;height:18px;background:#a0a0a0;"></div>
<div class="a t " style="top:306.84px;font-size:12px;line-height:12px;color:#000;left:406.5px;">Tide method</div>
<div class="a" style="left:402px;top:322px;width:174px;height:17px;background:#ffffe1;"></div>
<div class="a" style="left:402px;top:339px;width:174px;height:1px;background:#a0a0a0;"></div>
<div class="a" style="left:576px;top:322px;width:1px;height:18px;background:#a0a0a0;"></div>
<div class="a t " style="top:324.84px;font-size:12px;line-height:12px;color:#000;left:406.5px;">Number of tide gauges</div>
<div class="a" style="left:402px;top:340px;width:174px;height:17px;background:#ffffe1;"></div>
<div class="a" style="left:402px;top:357px;width:174px;height:1px;background:#a0a0a0;"></div>
<div class="a" style="left:576px;top:340px;width:1px;height:18px;background:#a0a0a0;"></div>
<div class="a t " style="top:342.84px;font-size:12px;line-height:12px;color:#000;letter-spacing:-0.05px;left:406.5px;">Maximum age tide values</div>
<div class="a" style="left:577px;top:304px;width:341px;height:17px;background:#ffffff;"></div>
<div class="a" style="left:577px;top:321px;width:341px;height:1px;background:#a0a0a0;"></div>
<div class="a" style="left:918px;top:304px;width:1px;height:18px;background:#a0a0a0;"></div>
<div class="a t " style="top:306.84px;font-size:12px;line-height:12px;color:#000;left:537.5px;width:400px;text-align:center;">Tide gauge</div>
<div class="a" style="left:577px;top:322px;width:341px;height:17px;background:#ffffff;"></div>
<div class="a" style="left:577px;top:339px;width:341px;height:1px;background:#a0a0a0;"></div>
<div class="a" style="left:918px;top:322px;width:1px;height:18px;background:#a0a0a0;"></div>
<div class="a t " style="top:324.84px;font-size:12px;line-height:12px;color:#000;left:538px;width:400px;text-align:center;">1</div>
<div class="a" style="left:577px;top:340px;width:341px;height:17px;background:#ffffff;"></div>
<div class="a" style="left:577px;top:357px;width:341px;height:1px;background:#a0a0a0;"></div>
<div class="a" style="left:918px;top:340px;width:1px;height:18px;background:#a0a0a0;"></div>
<div class="a t " style="top:342.84px;font-size:12px;line-height:12px;color:#000;letter-spacing:-0.3px;left:547.5px;width:400px;text-align:center;">60.00 [s]</div>
<div class="a" style="left:402px;top:322px;width:174px;height:1px;background:#ffffff;"></div>
<div class="a" style="left:402px;top:340px;width:174px;height:1px;background:#ffffff;"></div>
<div class="a" style="left:402px;top:305px;width:1px;height:52px;background:#ffffff;"></div>
<div class="a" style="left:899px;top:304px;width:19px;height:17px;background:#f0f0f0;"></div>
<div class="a" style="left:899px;top:320px;width:19px;height:1px;background:#696969;"></div>
<div class="a" style="left:917px;top:304px;width:1px;height:17px;background:#696969;"></div>
<div class="a" style="left:900px;top:319px;width:17px;height:1px;background:#a0a0a0;"></div>
<div class="a" style="left:916px;top:305px;width:1px;height:15px;background:#a0a0a0;"></div>
<div class="a" style="left:899px;top:304px;width:18px;height:1px;background:#ffffff;"></div>
<div class="a" style="left:899px;top:304px;width:1px;height:16px;background:#ffffff;"></div>
<div class="a" style="left:900px;top:305px;width:16px;height:1px;background:#e3e3e3;"></div>
<div class="a" style="left:900px;top:305px;width:1px;height:14px;background:#e3e3e3;"></div>
<div class="a" style="left:905px;top:311px;width:7px;height:1px;background:#000000;"></div>
<div class="a" style="left:906px;top:312px;width:5px;height:1px;background:#000000;"></div>
<div class="a" style="left:907px;top:313px;width:3px;height:1px;background:#000000;"></div>
<div class="a" style="left:908px;top:314px;width:1px;height:1px;background:#000000;"></div>
<div class="a" style="left:900px;top:322px;width:18px;height:8px;background:#f0f0f0;"></div>
<div class="a" style="left:900px;top:329px;width:18px;height:1px;background:#696969;"></div>
<div class="a" style="left:917px;top:322px;width:1px;height:8px;background:#696969;"></div>
<div class="a" style="left:901px;top:328px;width:16px;height:1px;background:#a0a0a0;"></div>
<div class="a" style="left:916px;top:323px;width:1px;height:6px;background:#a0a0a0;"></div>
<div class="a" style="left:900px;top:322px;width:17px;height:1px;background:#ffffff;"></div>
<div class="a" style="left:900px;top:322px;width:1px;height:7px;background:#ffffff;"></div>
<div class="a" style="left:901px;top:323px;width:15px;height:1px;background:#e3e3e3;"></div>
<div class="a" style="left:901px;top:323px;width:1px;height:5px;background:#e3e3e3;"></div>
<div class="a" style="left:900px;top:330px;width:18px;height:9px;background:#f0f0f0;"></div>
<div class="a" style="left:900px;top:338px;width:18px;height:1px;background:#696969;"></div>
<div class="a" style="left:917px;top:330px;width:1px;height:9px;background:#696969;"></div>
<div class="a" style="left:901px;top:337px;width:16px;height:1px;background:#a0a0a0;"></div>
<div class="a" style="left:916px;top:331px;width:1px;height:7px;background:#a0a0a0;"></div>
<div class="a" style="left:900px;top:330px;width:17px;height:1px;background:#ffffff;"></div>
<div class="a" style="left:900px;top:330px;width:1px;height:8px;background:#ffffff;"></div>
<div class="a" style="left:901px;top:331px;width:15px;height:1px;background:#e3e3e3;"></div>
<div class="a" style="left:901px;top:331px;width:1px;height:6px;background:#e3e3e3;"></div>
<div class="a" style="left:908px;top:325px;width:1px;height:1px;background:#000000;"></div>
<div class="a" style="left:907px;top:326px;width:3px;height:1px;background:#000000;"></div>
<div class="a" style="left:907px;top:333px;width:3px;height:1px;background:#000000;"></div>
<div class="a" style="left:908px;top:334px;width:1px;height:1px;background:#000000;"></div>
<div class="a" style="left:400px;top:448px;width:521px;height:1px;background:#ffffff;"></div>
<div class="a" style="left:920px;top:387px;width:1px;height:62px;background:#ffffff;"></div>
<div class="a" style="left:401px;top:447px;width:519px;height:1px;background:#e3e3e3;"></div>
<div class="a" style="left:919px;top:388px;width:1px;height:60px;background:#e3e3e3;"></div>
<div class="a" style="left:400px;top:387px;width:520px;height:1px;background:#a0a0a0;"></div>
<div class="a" style="left:400px;top:387px;width:1px;height:61px;background:#a0a0a0;"></div>
<div class="a" style="left:401px;top:388px;width:518px;height:1px;background:#696969;"></div>
<div class="a" style="left:401px;top:388px;width:1px;height:59px;background:#696969;"></div>
<div class="a" style="left:402px;top:389px;width:174px;height:1px;background:#000000;"></div>
<div class="a" style="left:402px;top:390px;width:174px;height:1px;background:#ffffff;"></div>
<div class="a" style="left:402px;top:390px;width:1px;height:16px;background:#ffffff;"></div>
<div class="a" style="left:402px;top:406px;width:174px;height:1px;background:#a0a0a0;"></div>
<div class="a" style="left:576px;top:389px;width:1px;height:18px;background:#a0a0a0;"></div>
<div class="a t " style="top:391.84px;font-size:12px;line-height:12px;color:#000;left:406.5px;">Tide system</div>
<div class="a" style="left:577px;top:389px;width:341px;height:1px;background:#000000;"></div>
<div class="a" style="left:577px;top:390px;width:341px;height:1px;background:#ffffff;"></div>
<div class="a" style="left:577px;top:390px;width:1px;height:16px;background:#ffffff;"></div>
<div class="a" style="left:577px;top:406px;width:341px;height:1px;background:#a0a0a0;"></div>
<div class="a" style="left:918px;top:389px;width:1px;height:18px;background:#a0a0a0;"></div>
<div class="a t " style="top:391.84px;font-size:12px;line-height:12px;color:#000;font-weight:bold;letter-spacing:-0.15px;left:548.2px;width:400px;text-align:center;">Tide gauge</div>
<div class="a" style="left:578px;top:405px;width:340px;height:1px;background:#a0a0a0;"></div>
<div class="a" style="left:577px;top:406px;width:341px;height:1px;background:#696969;"></div>
<div class="a" style="left:402px;top:407px;width:174px;height:17px;background:#ffffe1;"></div>
<div class="a" style="left:402px;top:424px;width:174px;height:1px;background:#a0a0a0;"></div>
<div class="a" style="left:576px;top:407px;width:1px;height:18px;background:#a0a0a0;"></div>
<div class="a t " style="top:409.84px;font-size:12px;line-height:12px;color:#000;letter-spacing:-0.22px;left:405.5px;">wassp [Tide Gauge]</div>
<div class="a" style="left:577px;top:407px;width:341px;height:17px;background:#ffffff;"></div>
<div class="a" style="left:577px;top:424px;width:341px;height:1px;background:#a0a0a0;"></div>
<div class="a" style="left:918px;top:407px;width:1px;height:18px;background:#a0a0a0;"></div>
<div class="a" style="left:578px;top:408px;width:320px;height:15px;background:#3399ff;"></div>
<div class="a t " style="top:409.84px;font-size:12px;line-height:12px;color:#ffffff;left:537.5px;width:400px;text-align:center;">tideStation</div>
<div class="a" style="left:899px;top:407px;width:19px;height:17px;background:#f0f0f0;"></div>
<div class="a" style="left:899px;top:423px;width:19px;height:1px;background:#696969;"></div>
<div class="a" style="left:917px;top:407px;width:1px;height:17px;background:#696969;"></div>
<div class="a" style="left:900px;top:422px;width:17px;height:1px;background:#a0a0a0;"></div>
<div class="a" style="left:916px;top:408px;width:1px;height:15px;background:#a0a0a0;"></div>
<div class="a" style="left:899px;top:407px;width:18px;height:1px;background:#ffffff;"></div>
<div class="a" style="left:899px;top:407px;width:1px;height:16px;background:#ffffff;"></div>
<div class="a" style="left:900px;top:408px;width:16px;height:1px;background:#e3e3e3;"></div>
<div class="a" style="left:900px;top:408px;width:1px;height:14px;background:#e3e3e3;"></div>
<div class="a" style="left:905px;top:414px;width:7px;height:1px;background:#000000;"></div>
<div class="a" style="left:906px;top:415px;width:5px;height:1px;background:#000000;"></div>
<div class="a" style="left:907px;top:416px;width:3px;height:1px;background:#000000;"></div>
<div class="a" style="left:908px;top:417px;width:1px;height:1px;background:#000000;"></div>
<div class="a" style="left:400px;top:596px;width:521px;height:1px;background:#ffffff;"></div>
<div class="a" style="left:920px;top:481px;width:1px;height:116px;background:#ffffff;"></div>
<div class="a" style="left:401px;top:595px;width:519px;height:1px;background:#e3e3e3;"></div>
<div class="a" style="left:919px;top:482px;width:1px;height:114px;background:#e3e3e3;"></div>
<div class="a" style="left:400px;top:481px;width:520px;height:1px;background:#a0a0a0;"></div>
<div class="a" style="left:400px;top:481px;width:1px;height:115px;background:#a0a0a0;"></div>
<div class="a" style="left:401px;top:482px;width:518px;height:1px;background:#696969;"></div>
<div class="a" style="left:401px;top:482px;width:1px;height:113px;background:#696969;"></div>
<div class="a" style="left:402px;top:484px;width:174px;height:16px;background:#ffffe1;"></div>
<div class="a" style="left:402px;top:483px;width:174px;height:1px;background:#000000;"></div>
<div class="a" style="left:402px;top:500px;width:174px;height:1px;background:#a0a0a0;"></div>
<div class="a" style="left:576px;top:483px;width:1px;height:18px;background:#a0a0a0;"></div>
<div class="a t " style="top:485.84px;font-size:12px;line-height:12px;color:#000;left:406.5px;">Draft method</div>
<div class="a" style="left:402px;top:501px;width:174px;height:17px;background:#ffffe1;"></div>
<div class="a" style="left:402px;top:518px;width:174px;height:1px;background:#a0a0a0;"></div>
<div class="a" style="left:576px;top:501px;width:1px;height:18px;background:#a0a0a0;"></div>
<div class="a t " style="top:503.84px;font-size:12px;line-height:12px;color:#000;left:406.5px;">Manual draft</div>
<div class="a" style="left:402px;top:519px;width:174px;height:17px;background:#ffffe1;"></div>
<div class="a" style="left:402px;top:536px;width:174px;height:1px;background:#a0a0a0;"></div>
<div class="a" style="left:576px;top:519px;width:1px;height:18px;background:#a0a0a0;"></div>
<div class="a t " style="top:521.84px;font-size:12px;line-height:12px;color:#000;left:406.5px;">Squat method</div>
<div class="a" style="left:577px;top:483px;width:341px;height:17px;background:#ffffff;"></div>
<div class="a" style="left:577px;top:500px;width:341px;height:1px;background:#a0a0a0;"></div>
<div class="a" style="left:918px;top:483px;width:1px;height:18px;background:#a0a0a0;"></div>
<div class="a t " style="top:485.84px;font-size:12px;line-height:12px;color:#000;left:538.5px;width:400px;text-align:center;">Enabled</div>
<div class="a" style="left:577px;top:501px;width:341px;height:17px;background:#ffffff;"></div>
<div class="a" style="left:577px;top:518px;width:341px;height:1px;background:#a0a0a0;"></div>
<div class="a" style="left:918px;top:501px;width:1px;height:18px;background:#a0a0a0;"></div>
<div class="a t " style="top:503.84px;font-size:12px;line-height:12px;color:#000;letter-spacing:-0.9px;left:547.5px;width:400px;text-align:center;">0.000</div>
<div class="a" style="left:577px;top:519px;width:341px;height:17px;background:#ffffff;"></div>
<div class="a" style="left:577px;top:536px;width:341px;height:1px;background:#a0a0a0;"></div>
<div class="a" style="left:918px;top:519px;width:1px;height:18px;background:#a0a0a0;"></div>
<div class="a t " style="top:521.84px;font-size:12px;line-height:12px;color:#000;left:537.5px;width:400px;text-align:center;">Disabled</div>
<div class="a" style="left:402px;top:501px;width:174px;height:1px;background:#ffffff;"></div>
<div class="a" style="left:402px;top:519px;width:174px;height:1px;background:#ffffff;"></div>
<div class="a" style="left:402px;top:484px;width:1px;height:52px;background:#ffffff;"></div>
<div class="a" style="left:899px;top:483px;width:19px;height:17px;background:#f0f0f0;"></div>
<div class="a" style="left:899px;top:499px;width:19px;height:1px;background:#696969;"></div>
<div class="a" style="left:917px;top:483px;width:1px;height:17px;background:#696969;"></div>
<div class="a" style="left:900px;top:498px;width:17px;height:1px;background:#a0a0a0;"></div>
<div class="a" style="left:916px;top:484px;width:1px;height:15px;background:#a0a0a0;"></div>
<div class="a" style="left:899px;top:483px;width:18px;height:1px;background:#ffffff;"></div>
<div class="a" style="left:899px;top:483px;width:1px;height:16px;background:#ffffff;"></div>
<div class="a" style="left:900px;top:484px;width:16px;height:1px;background:#e3e3e3;"></div>
<div class="a" style="left:900px;top:484px;width:1px;height:14px;background:#e3e3e3;"></div>
<div class="a" style="left:905px;top:490px;width:7px;height:1px;background:#000000;"></div>
<div class="a" style="left:906px;top:491px;width:5px;height:1px;background:#000000;"></div>
<div class="a" style="left:907px;top:492px;width:3px;height:1px;background:#000000;"></div>
<div class="a" style="left:908px;top:493px;width:1px;height:1px;background:#000000;"></div>
<div class="a" style="left:899px;top:519px;width:19px;height:17px;background:#f0f0f0;"></div>
<div class="a" style="left:899px;top:535px;width:19px;height:1px;background:#696969;"></div>
<div class="a" style="left:917px;top:519px;width:1px;height:17px;background:#696969;"></div>
<div class="a" style="left:900px;top:534px;width:17px;height:1px;background:#a0a0a0;"></div>
<div class="a" style="left:916px;top:520px;width:1px;height:15px;background:#a0a0a0;"></div>
<div class="a" style="left:899px;top:519px;width:18px;height:1px;background:#ffffff;"></div>
<div class="a" style="left:899px;top:519px;width:1px;height:16px;background:#ffffff;"></div>
<div class="a" style="left:900px;top:520px;width:16px;height:1px;background:#e3e3e3;"></div>
<div class="a" style="left:900px;top:520px;width:1px;height:14px;background:#e3e3e3;"></div>
<div class="a" style="left:905px;top:526px;width:7px;height:1px;background:#000000;"></div>
<div class="a" style="left:906px;top:527px;width:5px;height:1px;background:#000000;"></div>
<div class="a" style="left:907px;top:528px;width:3px;height:1px;background:#000000;"></div>
<div class="a" style="left:908px;top:529px;width:1px;height:1px;background:#000000;"></div>
<svg class="a" style="left:926px;top:643px" width="13" height="13" viewBox="0 0 13 13"><path d="M10.5 12.5 L12.5 10.5" stroke="#a0a0a0" stroke-width="1.2"/><path d="M11.8 12.5 L12.5 11.8" stroke="#ffffff" stroke-width="1"/><path d="M6.5 12.5 L12.5 6.5" stroke="#a0a0a0" stroke-width="1.2"/><path d="M7.8 12.5 L12.5 7.8" stroke="#ffffff" stroke-width="1"/><path d="M2.5 12.5 L12.5 2.5" stroke="#a0a0a0" stroke-width="1.2"/><path d="M3.8 12.5 L12.5 3.8" stroke="#ffffff" stroke-width="1"/></svg>
</body></html>
